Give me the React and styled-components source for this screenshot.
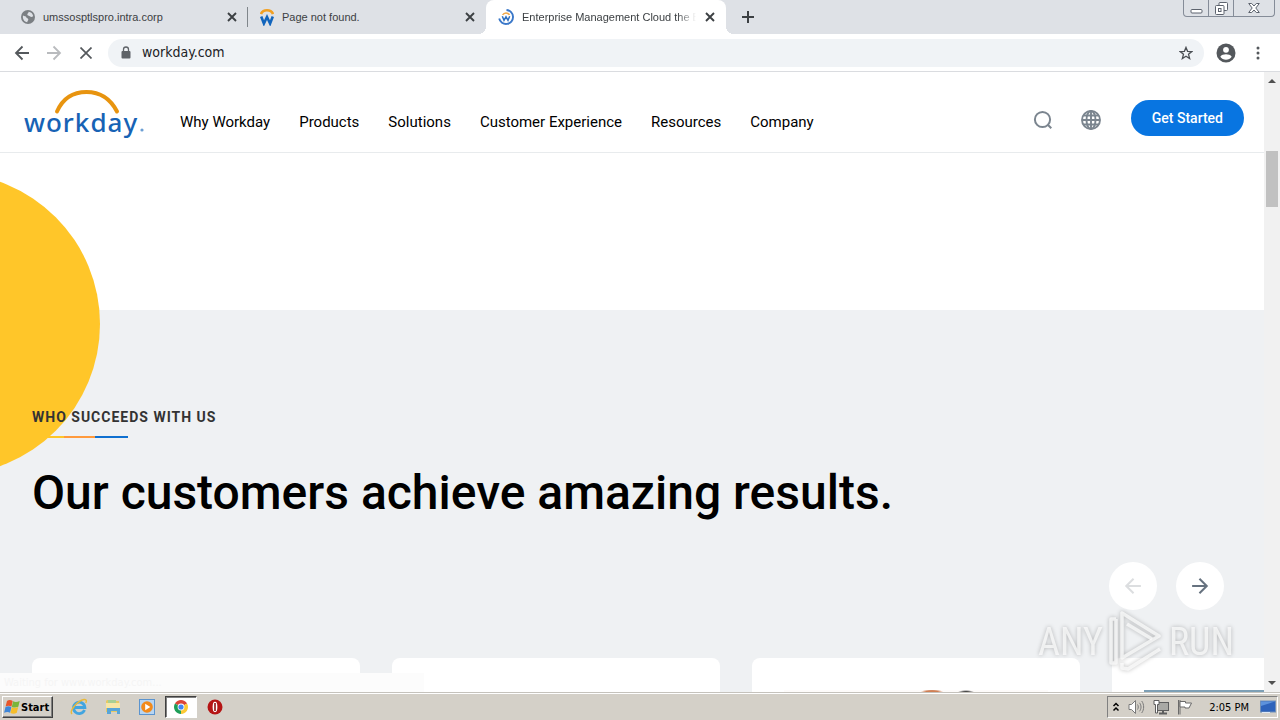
import React from "react";
import styled, { createGlobalStyle, css } from "styled-components";

const uiFont = `"DejaVu Sans Condensed", "DejaVu Sans", Tahoma, sans-serif`;
const tabFont = `"Liberation Sans", Arial, sans-serif`;
const pageFont = `Roboto, "Liberation Sans", sans-serif`;

const GlobalStyle = createGlobalStyle`
  *, *::before, *::after {
    box-sizing: border-box;
  }
  body {
    margin: 0;
    font-family: ${pageFont};
    background: #ffffff;
  }
  button {
    font: inherit;
    color: inherit;
    padding: 0;
    border: 0;
    background: none;
    cursor: pointer;
  }
  svg {
    display: block;
  }
`;

const Desktop = styled.div`
  position: relative;
  display: flex;
  flex-direction: column;
  height: 100vh;
  overflow: hidden;
`;

/* ---------- browser ---------- */

const TabStrip = styled.div`
  display: flex;
  flex: none;
  height: 34px;
  background: #dee1e6;
  font-family: ${tabFont};
  font-size: 11px;
  color: #3c4043;
`;

const Tabs = styled.div`
  display: flex;
  flex: 1;
  min-width: 0;
`;

const Tab = styled.div`
  position: relative;
  display: flex;
  align-items: center;
  gap: 8px;
  flex: 0 1 ${(p) => p.$width}px;
  min-width: 0;
  padding: 0 10px 0 ${(p) => p.$indent}px;

  ${(p) =>
    p.$divider &&
    css`
      &::after {
        content: "";
        position: absolute;
        right: 0;
        top: 7px;
        width: 1px;
        height: 20px;
        background: #80868b;
      }
    `}

  ${(p) =>
    p.$active &&
    css`
      background: #ffffff;
      border-radius: 8px 8px 0 0;

      &::before,
      &::after {
        content: "";
        position: absolute;
        bottom: 0;
        width: 8px;
        height: 8px;
      }
      &::before {
        left: -8px;
        background: radial-gradient(circle at 0 0, transparent 8px, #ffffff 8px);
      }
      &::after {
        right: -8px;
        background: radial-gradient(circle at 100% 0, transparent 8px, #ffffff 8px);
      }
    `}
`;

const TabTitle = styled.span`
  flex: 1;
  min-width: 0;
  line-height: 16px;
  white-space: nowrap;
  overflow: hidden;
  ${(p) =>
    p.$fade &&
    css`
      mask-image: linear-gradient(90deg, #000 155px, transparent 174px);
    `}
`;

const IconButton = styled.button`
  display: flex;
  flex: none;
  align-items: center;
  justify-content: center;
  width: ${(p) => p.$size || 16}px;
  height: ${(p) => p.$size || 16}px;
`;

const NewTab = styled(IconButton)`
  margin: 9px 0 0 14px;
`;

const WindowButtons = styled.div`
  display: flex;
  height: 17px;
  margin-right: 5px;
  border: 1px solid #858c98;
  border-top: 0;
  border-radius: 0 0 4px 4px;
`;

const WindowButton = styled.button`
  display: flex;
  align-items: center;
  justify-content: center;
  width: ${(p) => p.$width}px;

  & + & {
    border-left: 1px solid #858c98;
  }
`;

const Toolbar = styled.div`
  display: flex;
  align-items: center;
  flex: none;
  height: 38px;
  padding: 0 12px;
  background: #ffffff;
  border-bottom: 1px solid #dadce0;
`;

const NavButtons = styled.div`
  display: flex;
  gap: 12px;
  margin-right: 12px;
`;

const AddressBar = styled.label`
  display: flex;
  align-items: center;
  flex: 1;
  height: 28px;
  padding: 0 8px 0 12px;
  gap: 10px;
  border-radius: 14px;
  background: #f0f3f6;
`;

const AddressInput = styled.input`
  flex: 1;
  min-width: 0;
  padding: 0 0 2px;
  border: 0;
  outline: 0;
  background: none;
  font-family: ${uiFont};
  font-size: 14px;
  line-height: 20px;
  color: #202124;
`;

const ToolbarEnd = styled.div`
  display: flex;
  align-items: center;
  gap: 12px;
  margin-left: 12px;
`;

const Viewport = styled.div`
  position: relative;
  display: flex;
  flex: 1;
  min-height: 0;
`;

const Scrollbar = styled.div`
  display: flex;
  flex-direction: column;
  justify-content: space-between;
  align-items: center;
  flex: none;
  width: 16px;
  padding: 7px 0;
  background: #f1f1f1;
`;

const Track = styled.div`
  flex: 1;
  width: 12px;
  padding-top: 68px;
`;

const Thumb = styled.div`
  height: 56px;
  background: #c1c1c1;
`;

const StatusBubble = styled.div`
  position: absolute;
  left: 0;
  bottom: 0;
  width: 424px;
  height: 19px;
  padding: 0 4px;
  background: #fcfcfc;
  font-family: ${uiFont};
  font-size: 11px;
  line-height: 20px;
  color: #f5f5f5;
`;

/* ---------- web page ---------- */

const Page = styled.div`
  position: relative;
  display: flex;
  flex-direction: column;
  flex: 1;
  min-width: 0;
  overflow: hidden;
  background: #ffffff;
`;

const Header = styled.header`
  display: flex;
  align-items: center;
  flex: none;
  height: 81px;
  padding: 0 20px;
  border-bottom: 1px solid #e8ebed;
`;

const Brand = styled.a`
  flex: none;
  margin-right: 32px;
`;

const MainNav = styled.nav`
  display: flex;
  flex: 1;
  gap: 29px;
  padding-top: 20px;
  align-self: flex-start;
`;

const NavLink = styled.a`
  padding: 20px 0;
  font-size: 15px;
  line-height: 20px;
  color: #000000;
  text-decoration: none;
  white-space: nowrap;
`;

const HeaderActions = styled.div`
  display: flex;
  align-items: center;
  align-self: flex-start;
  padding-top: 28px;
`;

const HeaderTools = styled.div`
  display: flex;
  align-items: center;
  gap: 24px;
  padding-top: 4px;
`;

const GetStarted = styled.button`
  height: 36px;
  margin-left: 28px;
  padding: 0 21px;
  border-radius: 18px;
  background: #0875e1;
  color: #ffffff;
  font-size: 14px;
  font-weight: 500;
`;

const Hero = styled.div`
  flex: none;
  height: 157px;
`;

const Sun = styled.div`
  position: absolute;
  left: -202px;
  top: 101px;
  width: 302px;
  height: 302px;
  border-radius: 50%;
  background: #ffc629;
`;

const Customers = styled.section`
  display: flex;
  flex-direction: column;
  flex: 1;
  min-height: 0;
  padding: 96px 0 0 32px;
  background: #eff1f3;
`;

const Eyebrow = styled.p`
  position: relative;
  margin: 0;
  font-size: 14px;
  font-weight: 700;
  line-height: 22px;
  letter-spacing: 1px;
  text-transform: uppercase;
  color: #333333;
`;

const Rule = styled.div`
  position: relative;
  width: 96px;
  height: 2px;
  margin-top: 8px;
  background: linear-gradient(90deg, #ffc629 32px, #ff9a3c 32px 63px, #0f70d0 63px);
`;

const Title = styled.h2`
  position: relative;
  margin: 27px 0 0;
  font-size: 48px;
  font-weight: 500;
  line-height: 56px;
  color: #000000;
`;

const Pager = styled.div`
  display: flex;
  justify-content: flex-end;
  gap: 19px;
  margin: 41px 40px 0 0;
`;

const PagerButton = styled.button`
  display: flex;
  align-items: center;
  justify-content: center;
  width: 48px;
  height: 48px;
  border-radius: 50%;
  background: #ffffff;
  color: #66727f;

  &:disabled {
    color: #dcdee0;
  }
`;

const Cards = styled.div`
  display: flex;
  flex: 1;
  gap: 32px;
  min-height: 0;
  margin-top: 48px;
  overflow: hidden;
`;

const Card = styled.article`
  flex: none;
  width: 328px;
  padding: 32px 32px 0;
  border-radius: 8px 8px 0 0;
  background: #ffffff;
`;

const photos = {
  portrait: `radial-gradient(ellipse 12px 4px at 148px 3px, #cf7f55 60%, transparent),
    radial-gradient(ellipse 9px 3px at 182px 3px, #4a4a4a 50%, transparent), #fdfbfa`,
  sky: "#7d9fb5",
};

const Photo = styled.div`
  height: 160px;
  background: ${(p) => photos[p.$kind] || "#ffffff"};
`;

const Watermark = styled.div`
  position: absolute;
  right: 46px;
  bottom: 46px;
  display: flex;
  align-items: center;
  gap: 4px;
  pointer-events: none;
  font-family: "Liberation Sans Narrow", "Roboto Condensed", Roboto, sans-serif;
  font-size: 38px;
  font-weight: 400;
  line-height: 40px;
  color: rgba(255, 255, 255, 0.7);
  filter: drop-shadow(0 0 2px rgba(0, 0, 0, 0.35));
`;

/* ---------- taskbar ---------- */

const Taskbar = styled.footer`
  display: flex;
  align-items: center;
  flex: none;
  height: 28px;
  padding: 2px 2px 1px;
  border-top: 1px solid #c5c2bc;
  box-shadow: inset 0 1px #ffffff;
  background: #d4d0c8;
  font-family: ${uiFont};
  font-size: 11px;
  color: #000000;
`;

const StartButton = styled.button`
  display: flex;
  align-items: center;
  gap: 0;
  height: 22px;
  padding: 0 3px 0 1px;
  border: 1px solid;
  border-color: #ffffff #404040 #404040 #ffffff;
  box-shadow: inset -1px -1px #808080;
  font-weight: 700;
`;

const QuickLaunch = styled.div`
  display: flex;
  align-items: center;
  margin-left: 10px;
  gap: 2px;
`;

const LaunchButton = styled.button`
  display: flex;
  align-items: center;
  justify-content: center;
  width: 32px;
  height: 22px;
  ${(p) =>
    p.$active &&
    css`
      background: #ffffff;
      border: 1px solid;
      border-color: #404040 #ffffff #ffffff #404040;
      box-shadow: inset 1px 1px #808080;
    `}
`;

const Tray = styled.div`
  display: flex;
  align-items: center;
  height: 22px;
  margin-left: auto;
  padding: 0 1px 0 4px;
  border: 1px solid;
  border-color: #808080 #ffffff #ffffff #808080;
`;

const TrayIcons = styled.div`
  display: flex;
  align-items: center;
  gap: 8px;
`;

const Clock = styled.time`
  margin: 0 11px 0 16px;
  white-space: nowrap;
`;

/* ---------- drawings ---------- */

const CloseIcon = () => (
  <svg width="10" height="10" viewBox="0 0 10 10" stroke="#3c4043" strokeWidth="1.9">
    <path d="M1 1l8 8M9 1l-8 8" />
  </svg>
);

const GlobeFavicon = () => (
  <svg width="14" height="14" viewBox="0 0 14 14">
    <circle cx="7" cy="7" r="7" fill="#7b7f83" />
    <path
      d="M2 5.500c1.500 1 3 .4 3.300 1.800.3 1.200 2 .8 2 2.200 0 1-1 1.300-1 2.700C3.300 12 1.300 9 2 5.500zM7.500 1.700c2.500.2 4.300 2 4.700 4.300-1 1.600-2.600 1.200-3.300.3-.8-.8-2.600-.4-2.600-1.800 0-1.200 1.500-1 1.200-2.800z"
      fill="#dee1e6"
    />
  </svg>
);

const WorkdayFavicon = () => (
  <svg width="14" height="18" viewBox="0 0 14 18" fill="none">
    <path d="M1 6a6.300 5.500 0 0 1 12 0" stroke="#f2a023" strokeWidth="2.600" />
    <path d="M1.200 8.500l2.700 7L7 9l3.100 6.500 2.700-7" stroke="#1265bd" strokeWidth="2.600" />
  </svg>
);

const LoadingFavicon = () => (
  <svg width="16" height="16" viewBox="0 0 16 16" fill="none">
    <path d="M8.500 1A7 7 0 1 1 1.200 9.500" stroke="#3b78c9" strokeWidth="1.900" />
    <path d="M4.600 6a3.800 3.800 0 0 1 6.800 0" stroke="#f2a94a" strokeWidth="1.500" />
    <path d="M4.300 7.300l1.700 4 2-3.500 2 3.500 1.700-4" stroke="#2d6fc0" strokeWidth="1.500" />
  </svg>
);

const ArrowIcon = ({ flip, size = 16, color = "currentColor", weight = 1.8 }) => (
  <svg width={size} height={size} viewBox="0 0 16 16" fill="none" stroke={color} strokeWidth={weight}>
    <path d={flip ? "M15 8H2M8.500 1.500L2 8l6.500 6.500" : "M1 8h13M7.500 1.500L14 8l-6.500 6.500"} />
  </svg>
);

const WorkdayLogo = () => (
  <svg width="128" height="56" viewBox="0 0 128 56" role="img" aria-label="Workday">
    <path d="M37 27.500C43 14 54 8 66.500 8S90 14 97 27.500" fill="none" stroke="#e8940f" strokeWidth="4" strokeLinecap="round" />
    <text x="4" y="48" fontFamily="Noto Sans, Open Sans, sans-serif" fontSize="26" fontWeight="500" letterSpacing="1" fill="#1763b5">
      workday
    </text>
    <circle cx="122" cy="46" r="1.600" fill="#6c9fd4" />
  </svg>
);

const SearchIcon = () => (
  <svg width="20" height="20" viewBox="0 0 20 20" fill="none" stroke="#7b858f" strokeWidth="2">
    <circle cx="9.500" cy="9.500" r="7.600" />
    <path d="M14.800 14.800l3.500 3.500" />
  </svg>
);

const GlobeIcon = () => (
  <svg width="20" height="20" viewBox="0 0 20 20" fill="none" stroke="#7b858f" strokeWidth="1.900">
    <circle cx="10" cy="10" r="9" />
    <ellipse cx="10" cy="10" rx="4.500" ry="9" />
    <path d="M10 1v18M1 10h18M2.500 5.500h15M2.500 14.500h15" />
  </svg>
);

const PlayMark = () => (
  <svg width="58" height="64" viewBox="0 0 58 64" fill="none" stroke="currentColor" strokeWidth="3.500" strokeLinejoin="round">
    <path d="M15 3v45l37-22z" />
    <path d="M20 14l25 15" />
    <path d="M9 9H4v44h5V9M15 53v5l6 1 32-20" />
  </svg>
);

const WindowsFlag = () => (
  <svg width="17" height="16" viewBox="0 0 17 16">
    <path d="M3 2C5 .5 7 1 8.700 2L7.500 7.500C5.500 6.500 3.500 6.500 1.600 7.500z" fill="#e8562a" />
    <path d="M9.100 2.300c2 1 4 .8 6.600-.3l-1.400 5.700c-2 1-4 1.100-6.500.2z" fill="#7ab53a" />
    <path d="M1.500 8c2-1 4-.9 5.900 0l-1.300 5.700c-1.500-1-3.700-1-6 0z" fill="#3f86d8" />
    <path d="M7.800 8.300c2 1 4 .8 6.400-.2l-1.400 5.700c-2 1-4 1.200-6.400.2z" fill="#f5bd2a" />
  </svg>
);

const ExplorerE = () => (
  <svg width="18" height="18" viewBox="0 0 18 18" fill="none">
    <path d="M14.500 12a5.700 5.700 0 1 1 .4-2.500H5" stroke="#42a5e0" strokeWidth="2.800" />
    <path d="M2 16C-1 13 7 3 14 1.500c3-.5 2.500 2 1.800 3.500" stroke="#e9b93a" strokeWidth="1.400" />
  </svg>
);

const FolderIcon = () => (
  <svg width="16" height="16" viewBox="0 0 16 16">
    <path d="M1 2l1-1h4l1 1h7v11H1z" fill="#e6c964" />
    <path d="M3 1h8v4H3z" fill="#a9cf94" />
    <path d="M1 4h14v5H1z" fill="#f7e6a6" />
    <path d="M2 9h13v6h-3v-3H6v3H2z" fill="#58a5d8" />
  </svg>
);

const MediaIcon = () => (
  <svg width="16" height="16" viewBox="0 0 16 16">
    <rect x=".5" y=".5" width="15" height="15" fill="#b7d5f2" stroke="#5b94cf" />
    <circle cx="8" cy="8" r="5.800" fill="#f28a1b" />
    <path d="M6.200 4.800v6.400L11.300 8z" fill="#ffffff" />
  </svg>
);

const ChromeIcon = () => (
  <svg width="14" height="14" viewBox="0 0 14 14">
    <path d="M7 7L.94 3.500a7 7 0 0 1 12.120 0z" fill="#dc4437" />
    <path d="M7 7l6.060-3.500A7 7 0 0 1 7 14z" fill="#fcc934" />
    <path d="M7 7v7A7 7 0 0 1 .94 3.500z" fill="#1e9e58" />
    <circle cx="7" cy="7" r="3.400" fill="#ffffff" />
    <circle cx="7" cy="7" r="2.600" fill="#4285f4" />
  </svg>
);

const OperaIcon = () => (
  <svg width="16" height="16" viewBox="0 0 16 16">
    <circle cx="8" cy="8" r="7.500" fill="#b51414" />
    <ellipse cx="8" cy="8" rx="2.400" ry="5.200" fill="#ffffff" />
    <path d="M8 4v8" stroke="#8f1010" strokeWidth="1.600" />
  </svg>
);

const ScrollArrow = ({ down }) => (
  <svg width="8" height="4" viewBox="0 0 8 4">
    <path d={down ? "M0 0h8L4 4z" : "M0 4h8L4 0z"} fill="#505050" />
  </svg>
);

const links = ["Why Workday", "Products", "Solutions", "Customer Experience", "Resources", "Company"];

const tabs = [
  { title: "umssosptlspro.intra.corp", icon: <GlobeFavicon />, width: 248, indent: 21, divider: true },
  { title: "Page not found.", icon: <WorkdayFavicon />, width: 238, indent: 12 },
  { title: "Enterprise Management Cloud the B", icon: <LoadingFavicon />, width: 240, indent: 12, active: true },
];

const BrowserTabs = () => (
  <TabStrip>
    <Tabs>
      {tabs.map((tab) => (
        <Tab key={tab.title} $width={tab.width} $indent={tab.indent} $divider={tab.divider} $active={tab.active}>
          {tab.icon}
          <TabTitle $fade={tab.active}>{tab.title}</TabTitle>
          <IconButton aria-label="Close tab" $size={12}>
            <CloseIcon />
          </IconButton>
        </Tab>
      ))}
      <NewTab aria-label="New tab">
        <svg width="12" height="12" viewBox="0 0 12 12" stroke="#3c4043" strokeWidth="2">
          <path d="M6 0v12M0 6h12" />
        </svg>
      </NewTab>
    </Tabs>
    <WindowButtons>
      <WindowButton aria-label="Minimize" $width={24}>
        <svg width="13" height="13" viewBox="0 0 13 13" fill="#fff" stroke="#5d636e">
          <rect x="1" y="7.500" width="11" height="3.500" rx="1" />
        </svg>
      </WindowButton>
      <WindowButton aria-label="Restore" $width={25}>
        <svg width="13" height="13" viewBox="0 0 13 13" fill="#fff" stroke="#5d636e">
          <rect x="4" y=".5" width="8.500" height="8" rx="1" />
          <rect x=".5" y="3.500" width="8.500" height="9" rx="1" />
          <rect x="3.500" y="6.500" width="2.500" height="3" />
        </svg>
      </WindowButton>
      <WindowButton aria-label="Close" $width={41}>
        <svg width="12" height="10" viewBox="0 0 12 10" fill="#fff" stroke="#5d636e">
          <path d="M.7.500h3L6 3 8.300.500h3L7.800 5l3.500 4.500h-3L6 7 3.700 9.500h-3L4.200 5z" />
        </svg>
      </WindowButton>
    </WindowButtons>
  </TabStrip>
);

const BrowserToolbar = () => (
  <Toolbar>
    <NavButtons>
      <IconButton aria-label="Back" $size={20}>
        <ArrowIcon flip color="#54585c" />
      </IconButton>
      <IconButton aria-label="Forward" $size={20}>
        <ArrowIcon color="#b9bbbe" />
      </IconButton>
      <IconButton aria-label="Stop" $size={20}>
        <svg width="12" height="12" viewBox="0 0 12 12" stroke="#54585c" strokeWidth="1.700">
          <path d="M.5.500l11 11M11.500.500l-11 11" />
        </svg>
      </IconButton>
    </NavButtons>
    <AddressBar>
      <svg width="12" height="13" viewBox="0 0 12 13">
        <path d="M3.500 6V3.500a2.500 2.500 0 0 1 5 0V6" fill="none" stroke="#5f6368" strokeWidth="1.300" />
        <rect x="1.500" y="5" width="9" height="7.500" rx="1" fill="#5f6368" />
      </svg>
      <AddressInput aria-label="Address" defaultValue="workday.com" />
      <IconButton aria-label="Bookmark" $size={20}>
        <svg width="14" height="14" viewBox="0 0 15 15" fill="none" stroke="#4b4f54" strokeWidth="1.400">
          <path d="M7.500 1.500l1.700 4.200 4.500.3-3.500 2.900 1.200 4.500-3.900-2.500-3.900 2.500 1.200-4.500L1.300 6l4.500-.3z" />
        </svg>
      </IconButton>
    </AddressBar>
    <ToolbarEnd>
      <IconButton aria-label="Profile" $size={20}>
        <svg width="20" height="20" viewBox="0 0 20 20">
          <circle cx="10" cy="10" r="9.500" fill="#54585c" />
          <circle cx="10" cy="6.800" r="2.900" fill="#ffffff" />
          <path d="M4.300 13.700c1-1.700 3.500-2.400 5.700-2.400s4.700.7 5.700 2.400a6.800 6.800 0 0 1-11.400 0z" fill="#ffffff" />
        </svg>
      </IconButton>
      <IconButton aria-label="Menu" $size={20}>
        <svg width="4" height="14" viewBox="0 0 4 14" fill="#54585c">
          <circle cx="2" cy="2" r="1.500" />
          <circle cx="2" cy="7" r="1.500" />
          <circle cx="2" cy="12" r="1.500" />
        </svg>
      </IconButton>
    </ToolbarEnd>
  </Toolbar>
);

const SiteHeader = () => (
  <Header>
    <Brand href="#">
      <WorkdayLogo />
    </Brand>
    <MainNav>
      {links.map((label) => (
        <NavLink href="#" key={label}>
          {label}
        </NavLink>
      ))}
    </MainNav>
    <HeaderActions>
      <HeaderTools>
        <IconButton aria-label="Search" $size={24}>
          <SearchIcon />
        </IconButton>
        <IconButton aria-label="Language" $size={24}>
          <GlobeIcon />
        </IconButton>
      </HeaderTools>
      <GetStarted>Get Started</GetStarted>
    </HeaderActions>
  </Header>
);

const SystemTaskbar = () => (
  <Taskbar>
    <StartButton>
      <WindowsFlag />
      Start
    </StartButton>
    <QuickLaunch>
      <LaunchButton aria-label="Internet Explorer">
        <ExplorerE />
      </LaunchButton>
      <LaunchButton aria-label="Files">
        <FolderIcon />
      </LaunchButton>
      <LaunchButton aria-label="Media Player">
        <MediaIcon />
      </LaunchButton>
      <LaunchButton aria-label="Chrome" $active>
        <ChromeIcon />
      </LaunchButton>
      <LaunchButton aria-label="Opera">
        <OperaIcon />
      </LaunchButton>
    </QuickLaunch>
    <Tray>
      <TrayIcons>
        <svg width="8" height="10" viewBox="0 0 8 10" fill="none" stroke="#000" strokeWidth="1.500">
          <path d="M1.500 4L4 1.500 6.500 4M1.500 8.500L4 6l2.500 2.500" />
        </svg>
        <svg width="17" height="16" viewBox="0 0 17 16" fill="none" stroke="#7a7a7a">
          <path d="M1 5.500h2.500l4-4v13l-4-4H1z" fill="#ffffff" />
          <path d="M9.500 5.500c1 1.500 1 3.500 0 5M11.500 3.800c2 2.500 2 6 0 8.500M13.700 2c2.600 3.500 2.600 8.500 0 12" />
        </svg>
        <svg width="16" height="16" viewBox="0 0 16 16" fill="none" stroke="#5e5e5e">
          <rect x="4.500" y="3.500" width="11" height="8" fill="#a9a9a5" />
          <path d="M6 14.500h8M10 12v2" strokeWidth="2" />
          <path d="M1 1.500h5v4H4.500V14H2.500V5.500H1z" fill="#ffffff" />
        </svg>
        <svg width="16" height="16" viewBox="0 0 16 16" fill="#ffffff" stroke="#6a6a6a">
          <path d="M1.500 1v14.500M3 15.500V1" />
          <path d="M3 2.500h5.500v1.500h6l-2.500 5H8V8H3z" />
        </svg>
      </TrayIcons>
      <Clock>2:05 PM</Clock>
      <svg width="16" height="14" viewBox="0 0 16 14">
        <rect x=".5" y="1" width="15" height="11" fill="#2d63bb" stroke="#6f8fb8" />
        <path d="M1 6l14-4.500V1.500H1z" fill="#5c92dc" />
        <path d="M2 12.500h8" stroke="#dfe8f4" />
      </svg>
    </Tray>
  </Taskbar>
);

const App = () => {
  return (
    <Desktop>
      <GlobalStyle />
      <BrowserTabs />
      <BrowserToolbar />
      <Viewport>
        <Page>
          <SiteHeader />
          <Hero />
          <Customers>
            <Sun />
            <Eyebrow>Who succeeds with us</Eyebrow>
            <Rule />
            <Title>Our customers achieve amazing results.</Title>
            <Pager>
              <PagerButton aria-label="Previous" disabled>
                <ArrowIcon flip size={18} />
              </PagerButton>
              <PagerButton aria-label="Next">
                <ArrowIcon size={18} />
              </PagerButton>
            </Pager>
            <Cards>
              {["plain", "blank", "portrait", "sky"].map((kind) => (
                <Card key={kind}>
                  <Photo $kind={kind} />
                </Card>
              ))}
            </Cards>
          </Customers>
        </Page>
        <Scrollbar>
          <ScrollArrow />
          <Track>
            <Thumb />
          </Track>
          <ScrollArrow down />
        </Scrollbar>
        <StatusBubble>Waiting for www.workday.com...</StatusBubble>
      </Viewport>
      <SystemTaskbar />
      <Watermark>
        <span>ANY</span>
        <PlayMark />
        <span>RUN</span>
      </Watermark>
    </Desktop>
  );
};

export default App;
